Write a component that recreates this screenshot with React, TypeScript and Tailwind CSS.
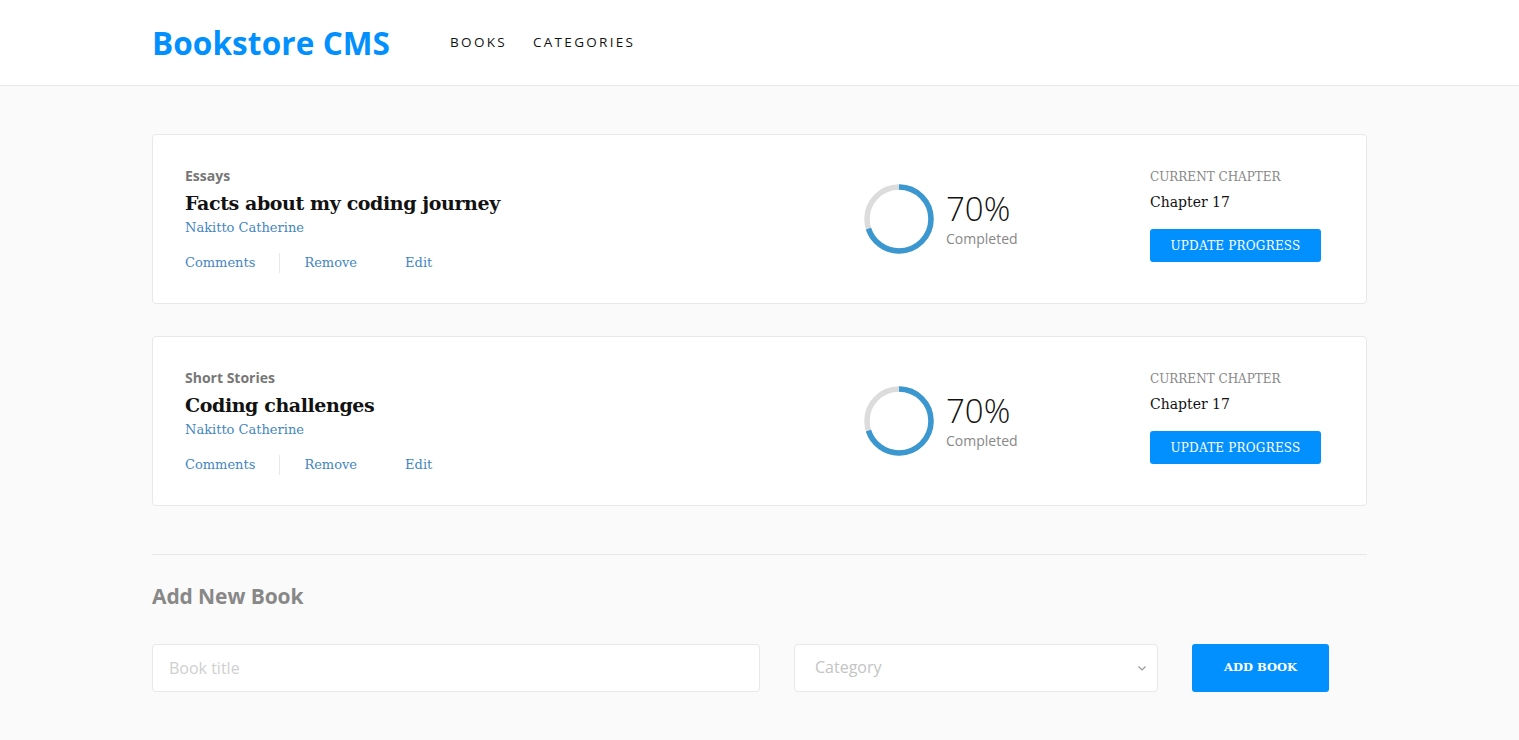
import React from 'react';

const sans = "font-['Open_Sans',_'Liberation_Sans',_sans-serif]";
const slab = "font-['DejaVu_Serif',_'Liberation_Serif',_serif]";

type Book = { category: string; title: string; author: string; progress: number; chapter: string };

const books: Book[] = [
  { category: 'Essays', title: 'Facts about my coding journey', author: 'Nakitto Catherine', progress: 70, chapter: 'Chapter 17' },
  { category: 'Short Stories', title: 'Coding challenges', author: 'Nakitto Catherine', progress: 70, chapter: 'Chapter 17' },
];

const ProgressRing = ({ value }: { value: number }) => {
  const r = 32;
  const c = 2 * Math.PI * r;
  return (
    <svg width="72" height="72" viewBox="0 0 72 72" className="-rotate-90">
      <circle cx="36" cy="36" r={r} fill="none" stroke="#dcdcdc" strokeWidth="5.5" />
      <circle
        cx="36"
        cy="36"
        r={r}
        fill="none"
        stroke="#3a97cf"
        strokeWidth="5.5"
        strokeDasharray={`${(c * value) / 100} ${c}`}
      />
    </svg>
  );
};

const BookCard = ({ book }: { book: Book }) => (
  <div className="flex items-center h-[170px] bg-white border border-[#e8e8e8] rounded-[4px] pl-[32px] pr-[45px]">
    <div className="flex-1 flex flex-col pt-[2px]">
      <span className={`${sans} text-[14px] font-bold text-[#777] leading-[18px]`}>{book.category}</span>
      <h2 className={`${slab} text-[19px] font-bold text-[#121212] leading-[26px] mt-[5px] tracking-[-0.4px]`}>{book.title}</h2>
      <span className={`${slab} text-[13px] font-light text-[#4386bf] leading-[18px] mt-[3px]`}>{book.author}</span>
      <div className={`${slab} flex items-center text-[13px] text-[#4386bf] mt-[16px]`}>
        <span className="pr-[24px] border-r border-[#e8e8e8] leading-[20px]">Comments</span>
        <span className="pl-[24px] pr-[48px]">Remove</span>
        <span>Edit</span>
      </div>
    </div>
    <div className="flex items-center gap-[11px] w-[287px]">
      <ProgressRing value={book.progress} />
      <div className="flex flex-col pt-[4px]">
        <div className={`${sans} text-[33px] font-light text-[#121212] leading-[30px]`}>{book.progress}%</div>
        <div className={`${sans} text-[14px] text-[#888] leading-[18px] mt-[6px]`}>Completed</div>
      </div>
    </div>
    <div className="flex flex-col w-[171px] -mt-[7px]">
      <span className={`${slab} text-[12px] font-light text-[#888] leading-[16px]`}>CURRENT CHAPTER</span>
      <span className={`${slab} text-[14px] text-[#121212] leading-[20px] mt-[7px]`}>{book.chapter}</span>
      <button className={`${slab} mt-[17px] h-[33px] w-[171px] bg-[#0290ff] rounded-[3px] text-white text-[12px] font-light tracking-[0.2px]`}>
        UPDATE PROGRESS
      </button>
    </div>
  </div>
);

export default function App() {
  return (
    <div className="min-h-screen bg-[#fafafa]">
      <header className="bg-white border-b border-[#e8e8e8] h-[86px]">
        <div className="mx-[152px] h-full flex items-center">
          <h1 className={`${sans} text-[31.5px] font-bold text-[#0290ff] tracking-[0.1px]`}>Bookstore CMS</h1>
          <nav className={`${sans} flex gap-[26px] ml-[60px] text-[13.5px] tracking-[2.3px] text-[#121212]`}>
            <a>BOOKS</a>
            <a>CATEGORIES</a>
          </nav>
        </div>
      </header>

      <main className="mx-[152px] pt-[48px]">
        <div className="flex flex-col gap-[32px]">
          {books.map(b => (
            <BookCard key={b.title} book={b} />
          ))}
        </div>

        <div className="border-t border-[#e8e8e8] mt-[48px] pt-[28px]">
          <h3 className={`${sans} text-[21px] font-bold text-[#888] leading-[26px] tracking-[-0.1px]`}>Add New Book</h3>
          <form className="flex items-center mt-[35px]">
            <input
              placeholder="Book title"
              className={`${sans} w-[608px] h-[48px] bg-white border border-[#e8e8e8] rounded-[4px] px-[16px] text-[16px] placeholder:text-[#cfcfcf] outline-none`}
            />
            <div className="relative w-[364px] h-[48px] ml-[34px] bg-white border border-[#e8e8e8] rounded-[4px] flex items-center px-[20px] pb-[2px]">
              <span className={`${sans} text-[16px] text-[#c4c4c4]`}>Category</span>
              <svg className="absolute right-[10px] top-[19px]" width="10" height="8" viewBox="0 0 10 8">
                <path d="M1.5 2.5 L5 6 L8.5 2.5" fill="none" stroke="#999" strokeWidth="1.2" />
              </svg>
            </div>
            <button
              type="button"
              className={`${slab} ml-[34px] w-[137px] h-[48px] bg-[#0290ff] rounded-[3px] text-white text-[11.5px] font-bold`}
            >
              ADD BOOK
            </button>
          </form>
        </div>
      </main>
    </div>
  );
}
